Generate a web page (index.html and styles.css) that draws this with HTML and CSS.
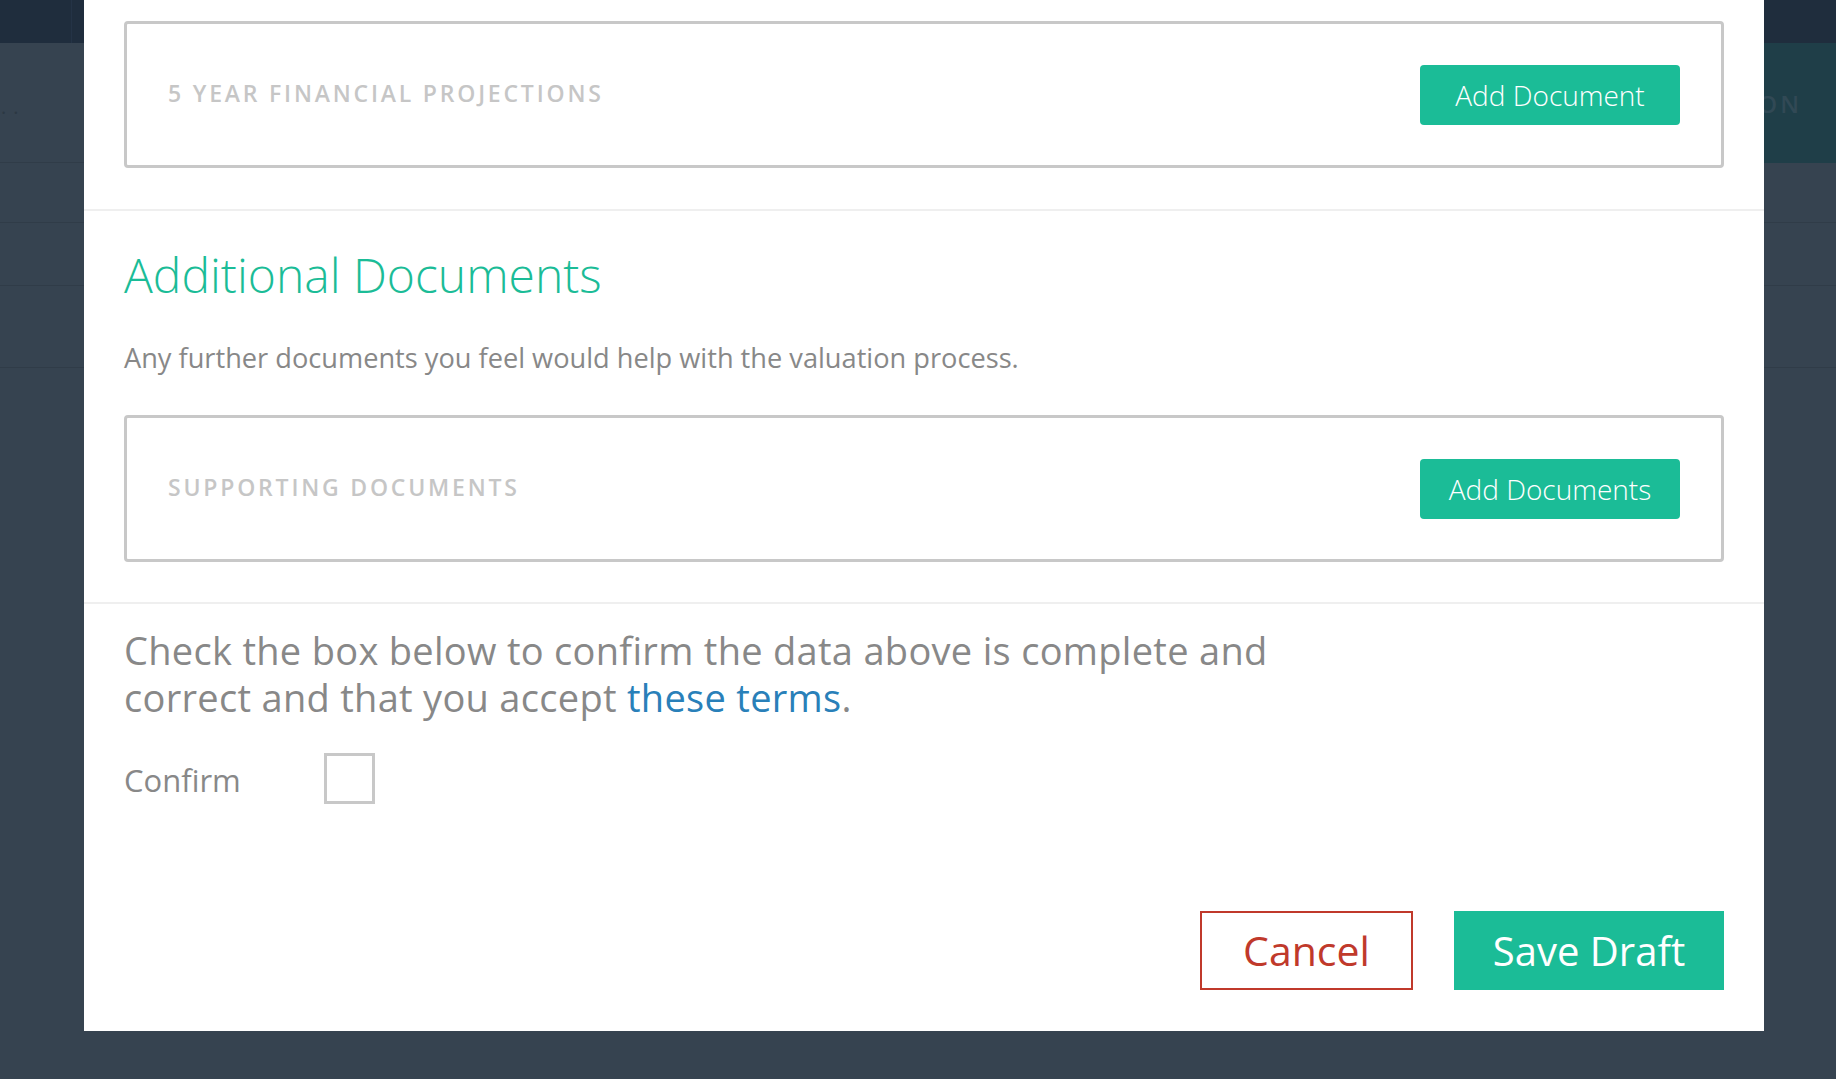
FILE: index.html
```html
<!DOCTYPE html>
<html lang="en">
<head>
<meta charset="utf-8">
<title>Valuation documents</title>
<link rel="stylesheet" href="styles.css">
</head>
<body>
<div class="app">
  <header class="topbar"><div class="brand"></div></header>
  <div class="hero">
    <div class="hero-main"><span class="crumb">..</span></div>
    <div class="hero-side"><span class="side-title">VALUATION</span></div>
  </div>
  <div class="row r1"></div>
  <div class="row r2"></div>
  <div class="row r3"></div>
</div>

<div class="modal">
  <section class="sec sec-docs">
    <div class="doc-box">
      <span class="doc-label">5 YEAR FINANCIAL PROJECTIONS</span>
      <button class="btn-add" type="button">Add Document</button>
    </div>
  </section>

  <section class="sec sec-additional">
    <h2 class="sec-title">Additional Documents</h2>
    <p class="desc">Any further documents you feel would help with the valuation process.</p>
    <div class="doc-box doc-box-gap">
      <span class="doc-label">SUPPORTING DOCUMENTS</span>
      <button class="btn-add" type="button">Add Documents</button>
    </div>
  </section>

  <section class="sec sec-confirm">
    <p class="terms">Check the box below to confirm the data above is complete and correct and that you accept <a class="terms-link" href="#">these terms</a>.</p>
    <div class="confirm-row">
      <label class="confirm-label" for="confirm">Confirm</label>
      <span class="checkbox" id="confirm"></span>
    </div>
    <div class="actions">
      <button class="btn-cancel" type="button">Cancel</button>
      <button class="btn-save" type="button">Save Draft</button>
    </div>
  </section>
</div>
</body>
</html>
```

FILE: styles.css
```css
* {
  box-sizing: border-box;
  margin: 0;
  padding: 0;
}

html,
body {
  width: 1836px;
  height: 1079px;
  overflow: hidden;
}

body {
  position: relative;
  background: #364350;
  font-family: "Open Sans", "Noto Sans", sans-serif;
}

/* ---------- background page (under the overlay) ---------- */
.app {
  height: 1079px;
  display: flex;
  flex-direction: column;
}

.topbar {
  flex: none;
  height: 43px;
  background: #1f2d3d;
  display: flex;
}

.brand {
  width: 72px;
  border-right: 1px solid #243346;
}

.hero {
  flex: none;
  height: 120px;
  display: flex;
}

.hero-main {
  flex: 1;
  border-bottom: 1px solid #303c48;
  padding: 52px 0 0 1px;
}

.crumb {
  font-size: 20px;
  line-height: 24px;
  letter-spacing: 7px;
  color: #2c3843;
}

.hero-side {
  width: 336px;
  background: #1f3e48;
  display: flex;
  align-items: center;
  justify-content: flex-end;
  padding-right: 34px;
}

.side-title {
  font-size: 24px;
  font-weight: 600;
  letter-spacing: 3px;
  color: #314955;
}

.row {
  flex: none;
  border-bottom: 1px solid #303c48;
}

.r1 { height: 60px; }
.r2 { height: 63px; }
.r3 { height: 82px; }

/* ---------- modal ---------- */
.modal {
  position: absolute;
  left: 84px;
  top: 0;
  width: 1680px;
  background: #ffffff;
}

.sec {
  padding: 0 40px 41px;
  border-bottom: 2px solid #efefef;
}

.sec-docs {
  padding-top: 21px;
}

.sec-additional {
  padding-top: 36px;
  padding-bottom: 40px;
}

.sec-confirm {
  padding: 23px 40px 41px;
  border-bottom: none;
}

.doc-box {
  height: 147px;
  border: 3px solid #c8c8c8;
  border-radius: 4px;
  display: flex;
  align-items: center;
  justify-content: space-between;
  padding: 0 41px;
}

.doc-box-gap {
  margin-top: 39px;
}

.doc-label {
  font-size: 23px;
  font-weight: 600;
  line-height: 30px;
  letter-spacing: 2.8px;
  color: #c6c6c6;
  margin-top: -3px;
}

.btn-add {
  width: 260px;
  height: 60px;
  border: none;
  border-radius: 4px;
  background: #1bbc97;
  color: #ffffff;
  font-family: inherit;
  font-size: 28px;
  font-weight: 300;
  line-height: 60px;
  text-align: center;
}

.sec-title {
  font-size: 48px;
  font-weight: 300;
  line-height: 56px;
  color: #1bbc97;
}

.desc {
  margin-top: 37px;
  font-size: 27.2px;
  line-height: 36px;
  color: #888888;
}

.terms {
  max-width: 1200px;
  font-size: 38px;
  line-height: 47px;
  letter-spacing: 0.3px;
  color: #888888;
}

.terms-link {
  color: #2980b9;
  text-decoration: none;
}

.confirm-row {
  margin-top: 32px;
  display: flex;
  align-items: flex-start;
}

.confirm-label {
  width: 200px;
  padding-top: 2px;
  font-size: 31px;
  line-height: 50px;
  color: #888888;
}

.checkbox {
  width: 51px;
  height: 51px;
  border: 3px solid #c8c8c8;
}

.actions {
  margin-top: 106px;
  display: flex;
  justify-content: flex-end;
  gap: 41px;
}

.btn-cancel,
.btn-save {
  height: 79px;
  font-family: inherit;
  font-size: 40px;
  font-weight: 400;
  line-height: 75px;
  text-align: center;
}

.btn-cancel {
  width: 213px;
  border: 2px solid #c0392b;
  background: #ffffff;
  color: #c0392b;
  font-size: 41px;
}

.btn-save {
  width: 270px;
  border: 2px solid #1bbc97;
  background: #1bbc97;
  color: #ffffff;
}
```
